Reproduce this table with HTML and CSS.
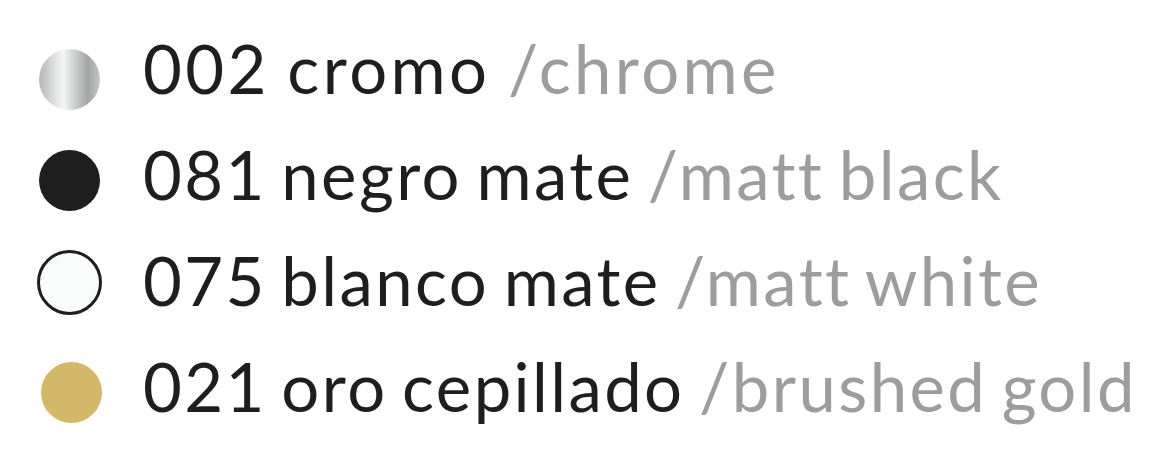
FILE: index.html
```html
<!DOCTYPE html>
<html>
<head>
<meta charset="utf-8">
<link rel="stylesheet" href="styles.css">
</head>
<body>
<ul class="finishes">
  <li class="finish">
    <span class="swatch swatch-chrome"></span>
    <span class="label label-wide"><span class="es">002 cromo</span> <span class="en">/chrome</span></span>
  </li>
  <li class="finish">
    <span class="swatch swatch-black"></span>
    <span class="label"><span class="es">081 negro mate</span> <span class="en">/matt black</span></span>
  </li>
  <li class="finish">
    <span class="swatch swatch-white"></span>
    <span class="label"><span class="es">075 blanco mate</span> <span class="en">/matt white</span></span>
  </li>
  <li class="finish">
    <span class="swatch swatch-gold"></span>
    <span class="label"><span class="es">021 oro cepillado</span> <span class="en">/brushed gold</span></span>
  </li>
</ul>
</body>
</html>
```
FILE: styles.css
```css
html, body {
  margin: 0;
  padding: 0;
  background: #ffffff;
}
.finishes {
  list-style: none;
  margin: 0;
  padding: 17px 0 0 39px;
  display: flex;
  flex-direction: column;
}
.finish {
  display: flex;
  align-items: center;
  gap: 43px;
  height: 106px;
}
.swatch {
  flex: none;
  width: 61px;
  height: 61px;
  border-radius: 50%;
  box-sizing: border-box;
}
.swatch-chrome {
  background: linear-gradient(90deg, #b3b4b4 0%, #d6d7d7 20%, #f4f5f5 40%, #cfd0d0 58%, #a3a5a5 80%, #c4c5c5 100%);
  margin-top: 19px;
}
.swatch-black {
  background: #1e1e1e;
  margin-top: 9px;
}
.swatch-white {
  background: #fafcfb;
  border: 3px solid #1e1e1e;
  width: 65px;
  height: 65px;
  margin-left: -2px;
  margin-right: -2px;
}
.swatch-gold {
  background: #d4b86a;
  margin-left: 2px;
  margin-right: -2px;
  margin-top: 8px;
}
.label {
  font-family: "Lato", "Noto Sans", sans-serif;
  font-size: 67px;
  line-height: 1;
  letter-spacing: 2.4px;
  word-spacing: -5px;
  white-space: nowrap;
  padding-bottom: 4px;
}
.label-wide {
  letter-spacing: 3.4px;
  word-spacing: -3px;
}
.es {
  color: #1e1e1e;
}
.en {
  color: #9d9d9d;
}
```
